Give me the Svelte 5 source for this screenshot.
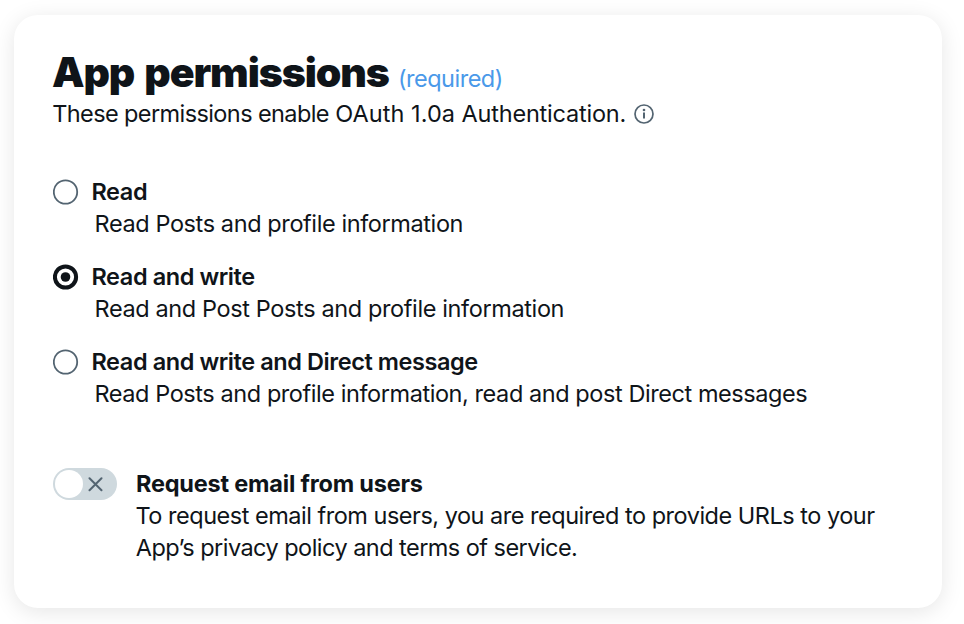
<script>
  let selected = $state('write');
  const options = [
    { id: 'read', title: 'Read', text: 'Read Posts and profile information' },
    { id: 'write', title: 'Read and write', text: 'Read and Post Posts and profile information' },
    { id: 'dm', title: 'Read and write and Direct message', text: 'Read Posts and profile information, read and post Direct messages' }
  ];
</script>

<main>
  <section class="card">
    <header>
      <h1>App permissions</h1>
      <span class="required">(required)</span>
    </header>
    <div class="intro">
      <p class="sub"><span class="tight">These permissions enable</span> <span class="wide">OAuth 1.0a</span> Authentication.</p>
      <svg width="20" height="20" viewBox="0 0 20 20" fill="none" stroke="#536471" stroke-width="1.7">
        <circle cx="10" cy="10" r="9" />
        <path d="M10 8.6v6" stroke-width="2" />
        <circle cx="10" cy="6" r="1.3" fill="#536471" stroke="none" />
      </svg>
    </div>

    <div class="options">
      {#each options as o (o.id)}
        <div class="option {o.id}">
          <button class="radio" aria-label={o.title} onclick={() => (selected = o.id)}>
            <svg width="26" height="26" viewBox="0 0 26 26" fill="none">
              {#if selected === o.id}
                <circle cx="12.5" cy="13" r="10.6" stroke="#0f1419" stroke-width="4" />
                <circle cx="12.5" cy="13" r="4.8" fill="#0f1419" />
              {:else}
                <circle cx="12.5" cy="13" r="11.7" stroke="#536471" stroke-width="1.8" />
              {/if}
            </svg>
          </button>
          <div>
            <h2>{o.title}</h2>
            <p class="desc">{o.text}</p>
          </div>
        </div>
      {/each}
    </div>

    <div class="email">
      <div class="toggle">
        <span class="knob"></span>
        <svg width="15" height="15" viewBox="0 0 15 15" stroke="#536471" stroke-width="2" stroke-linecap="round">
          <path d="M1.5 1.2l12 12M13.5 1.2l-12 12" />
        </svg>
      </div>
      <div>
        <h2 class="request">Request email from users</h2>
        <p class="e1">To request email from users, you are required to provide URLs to your</p>
        <p class="e2">App’s privacy policy and terms of service.</p>
      </div>
    </div>
  </section>
</main>

<style>
  main {
    box-sizing: border-box;
    width: 964px;
    height: 624px;
    padding: 15px 22px 16px 14px;
    background: #fff;
    overflow: hidden;
    color: #0f1419;
    font: 23.5px/32px Inter, sans-serif;
    white-space: nowrap;
  }
  .card {
    box-sizing: border-box;
    height: 593px;
    padding: 33px 39px;
    border-radius: 24px;
    background: #fff;
    box-shadow: 0 4px 22px rgba(0, 0, 0, 0.1);
  }
  h1, h2, p { margin: 0; }
  header { display: flex; align-items: baseline; height: 50px; line-height: 48px; }
  h1 { font-size: 41px; font-weight: 900; letter-spacing: -1.1px; word-spacing: 3px; width: 346px; margin-left: -1px; }
  .required { color: #4a99e9; letter-spacing: -0.5px; }
  .intro { display: flex; align-items: center; height: 32px; }
  .sub { width: 581px; letter-spacing: -0.2px; text-indent: -0.8px; }
  .tight { letter-spacing: -0.6px; }
  .wide { letter-spacing: 0.05px; }
  .options { display: flex; flex-direction: column; gap: 21px; margin-top: 46px; }
  .option { display: flex; gap: 12.5px; height: 64px; }
  h2 { font-size: 23.5px; line-height: 32px; font-weight: 600; letter-spacing: -0.42px; }
  .desc { padding-left: 3px; }
  .read .desc { letter-spacing: -0.4px; }
  .write .desc { letter-spacing: -0.38px; }
  .dm .desc { letter-spacing: -0.43px; }
  .e1 { letter-spacing: -0.49px; text-indent: -0.5px; }
  .e2 { letter-spacing: -0.54px; text-indent: -0.3px; }
  h2.request { font-weight: 700; letter-spacing: -0.2px; }
  .radio {
    flex: none;
    width: 26px;
    height: 26px;
    margin: 3px 0 0;
    padding: 0;
    border: 0;
    background: none;
  }
  .radio svg { display: block; }
  .email { display: flex; gap: 19px; margin-top: 58px; }
  .toggle {
    flex: none;
    box-sizing: border-box;
    display: flex;
    align-items: center;
    gap: 5px;
    width: 64px;
    height: 32px;
    padding: 2px;
    border-radius: 16px;
    background: #cfd9de;
  }
  .knob { width: 28px; height: 28px; border-radius: 50%; background: #fff; }
</style>
